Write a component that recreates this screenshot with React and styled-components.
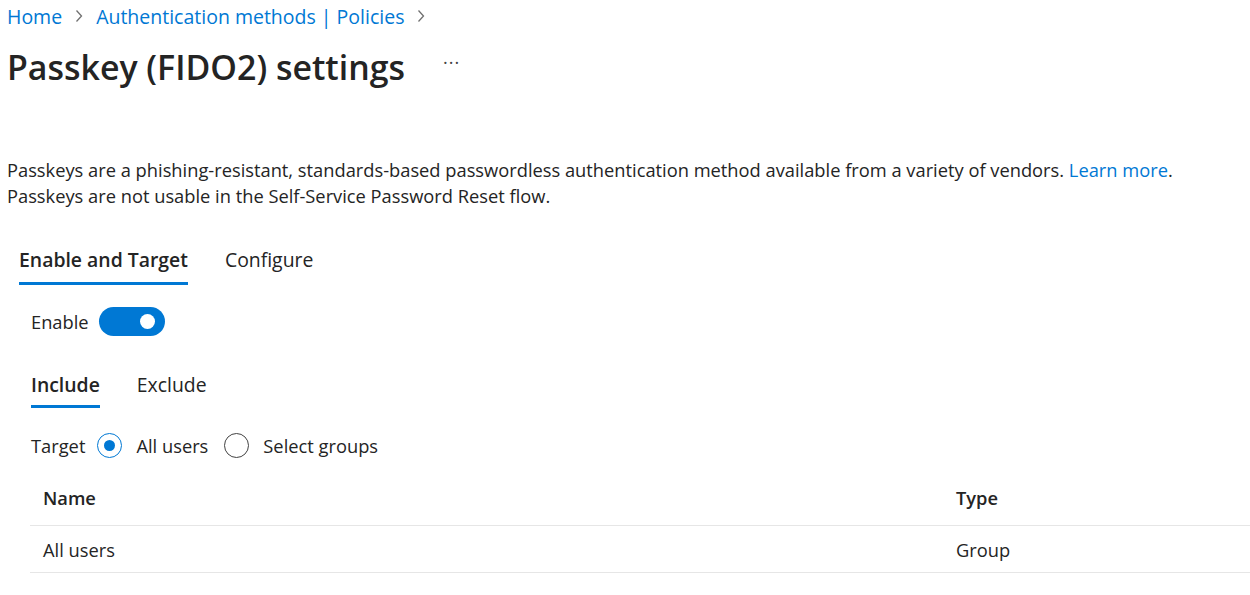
import React from "react";
import styled, { createGlobalStyle } from "styled-components";

const blue = "#0078d4";
const ink = "#242424";

const GlobalStyle = createGlobalStyle`
  html, body {
    margin: 0;
    padding: 0;
    background: #fff;
  }
  body {
    font-family: "Segoe UI", "Open Sans", "Noto Sans", sans-serif;
    color: ${ink};
  }
`;

const Page = styled.div`
  width: 1250px;
  height: 595px;
  overflow: hidden;
  padding: 0 0 0 7px;
  box-sizing: border-box;
`;

const Breadcrumb = styled.nav`
  display: flex;
  align-items: center;
  height: 32px;
  font-size: 19.5px;
  gap: 12px;
`;

const Crumb = styled.a`
  color: ${blue};
  text-decoration: none;
`;

const Chevron = () => (
  <svg width="10" height="14" viewBox="0 0 10 14" aria-hidden>
    <path d="M2.5 1.5 L7.5 7 L2.5 12.5" fill="none" stroke="#707070" strokeWidth="1.3" />
  </svg>
);

const TitleRow = styled.div`
  display: flex;
  align-items: center;
  height: 70px;
  gap: 38px;
`;

const Title = styled.h1`
  margin: 0;
  font-size: 33.9px;
  font-weight: 600;
  color: ${ink};
`;

const More = styled.span`
  font-size: 18px;
  color: #424242;
  letter-spacing: 1px;
  margin-top: -10px;
`;

const Description = styled.p`
  margin: 55px 0 0;
  font-size: 18.3px;
  line-height: 26px;
`;

const Link = styled.a`
  color: ${blue};
  text-decoration: none;
`;

const Tabs = styled.div`
  display: flex;
  gap: 37px;
  margin: ${(p) => p.margin};
`;

const Tab = styled.div`
  font-size: 19.4px;
  font-weight: ${(p) => (p.active ? 600 : 400)};
  padding-bottom: ${(p) => p.pad}px;
  border-bottom: 3px solid ${(p) => (p.active ? blue : "transparent")};
  line-height: 26px;
`;

const Field = styled.div`
  display: flex;
  align-items: center;
  gap: ${(p) => p.gap}px;
  margin: ${(p) => p.margin};
  padding-left: 24px;
  font-size: 18.3px;
`;

const Toggle = styled.div`
  width: 66px;
  height: 29px;
  border-radius: 15px;
  background: ${blue};
  position: relative;
  &::after {
    content: "";
    position: absolute;
    width: 15px;
    height: 15px;
    border-radius: 50%;
    background: #fff;
    top: 7px;
    right: 10px;
  }
`;

const RadioGroup = styled.div`
  display: flex;
  align-items: center;
  gap: 14px;
  margin-right: 4px;
`;

const Radio = styled.span`
  width: 25px;
  height: 25px;
  box-sizing: border-box;
  border-radius: 50%;
  border: 1.5px solid ${(p) => (p.checked ? blue : "#424242")};
  display: inline-flex;
  align-items: center;
  justify-content: center;
  &::after {
    content: "";
    width: 11px;
    height: 11px;
    border-radius: 50%;
    background: ${(p) => (p.checked ? blue : "transparent")};
  }
`;

const Table = styled.div`
  margin: 14px 0 0 23px;
  font-size: 18.3px;
`;

const Row = styled.div`
  display: grid;
  grid-template-columns: 913px 1fr;
  height: ${(p) => (p.head ? 54 : 47)}px;
  padding-bottom: ${(p) => (p.head ? 2 : 0)}px;
  align-items: center;
  padding-left: 13px;
  border-bottom: 1px solid #e6e6e6;
  font-weight: ${(p) => (p.head ? 600 : 400)};
  box-sizing: border-box;
`;

export default function App() {
  return (
    <>
      <GlobalStyle />
      <Page>
        <Breadcrumb>
          <Crumb>Home</Crumb>
          <Chevron />
          <Crumb>Authentication methods | Policies</Crumb>
          <Chevron />
        </Breadcrumb>
        <TitleRow>
          <Title>Passkey (FIDO2) settings</Title>
          <More>···</More>
        </TitleRow>
        <Description>
          Passkeys are a phishing-resistant, standards-based passwordless
          authentication method available from a variety of vendors.{" "}
          <Link>Learn more</Link>.
          <br />
          Passkeys are not usable in the Self-Service Password Reset flow.
        </Description>
        <Tabs margin="38px 0 0 12px">
          <Tab active pad={9}>Enable and Target</Tab>
          <Tab pad={9}>Configure</Tab>
        </Tabs>
        <Field margin="22px 0 0" gap={10}>
          <span>Enable</span>
          <Toggle />
        </Field>
        <Tabs margin="36px 0 0 24px">
          <Tab active pad={7}>Include</Tab>
          <Tab pad={7}>Exclude</Tab>
        </Tabs>
        <Field margin="25px 0 0" gap={12}>
          <span>Target</span>
          <RadioGroup>
            <Radio checked />
            <span>All users</span>
          </RadioGroup>
          <RadioGroup>
            <Radio />
            <span>Select groups</span>
          </RadioGroup>
        </Field>
        <Table>
          <Row head>
            <span>Name</span>
            <span>Type</span>
          </Row>
          <Row>
            <span>All users</span>
            <span>Group</span>
          </Row>
        </Table>
      </Page>
    </>
  );
}
